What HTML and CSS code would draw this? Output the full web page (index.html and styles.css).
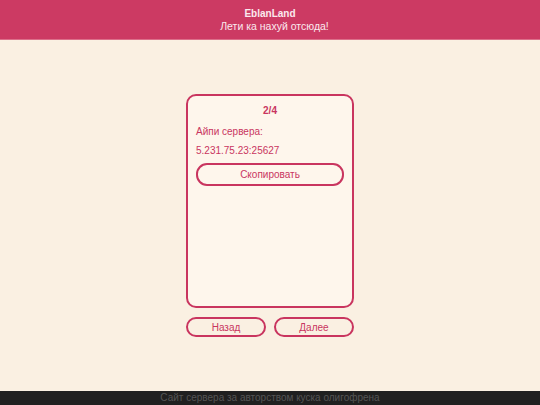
FILE: index.html
```html
<!DOCTYPE html>
<html lang="ru">
<head>
<meta charset="utf-8">
<title>EblanLand</title>
<link rel="stylesheet" href="styles.css">
</head>
<body>
<div class="page">
  <header class="header">
    <div class="title">EblanLand</div>
    <div class="subtitle">Лети ка нахуй отсюда!</div>
  </header>
  <main class="main">
    <div class="wrap">
      <div class="card">
        <div class="step">2/4</div>
        <p class="label">Айпи сервера:</p>
        <p class="ip">5.231.75.23:25627</p>
        <button class="btn copy">Скопировать</button>
      </div>
      <div class="nav">
        <button class="btn navbtn">Назад</button>
        <button class="btn navbtn">Далее</button>
      </div>
    </div>
  </main>
  <footer class="footer">Сайт сервера за авторством куска олигофрена</footer>
</div>
</body>
</html>
```
FILE: styles.css
```css
* { box-sizing: border-box; }
html, body { margin: 0; padding: 0; }
body {
  font-family: "Liberation Sans", Arial, sans-serif;
  background: #faf0e2;
  color: #c9355f;
}
.page {
  display: flex;
  flex-direction: column;
  height: 405px;
}
.header {
  height: 40px;
  background: #cc3a63;
  border-bottom: 1px solid #dc6f8a;
  color: #fbe9ee;
  text-align: center;
  font-size: 10px;
  padding-top: 8px;
  line-height: 12px;
}
.title { font-weight: bold; }
.subtitle { font-size: 10.5px; padding-left: 9px; }
.main {
  flex: 1;
  display: flex;
  align-items: center;
  justify-content: center;
}
.wrap {
  width: 168px;
  display: flex;
  flex-direction: column;
  gap: 9px;
}
.card {
  height: 214px;
  background: #fef6ec;
  border: 2px solid #c9355f;
  border-radius: 10px;
  padding: 8px 8px;
  font-size: 10px;
}
.step {
  text-align: center;
  font-weight: bold;
  line-height: 13px;
}
.label { margin: 8px 0 0; line-height: 13px; }
.ip { margin: 6px 0 0; line-height: 13px; }
.btn {
  font-family: "Liberation Sans", Arial, sans-serif;
  font-size: 10px;
  color: #c9355f;
  background: transparent;
  border: 2px solid #c9355f;
  cursor: pointer;
}
.copy {
  display: block;
  width: 100%;
  height: 23px;
  margin-top: 6px;
  border-radius: 11px;
}
.nav {
  display: flex;
  gap: 8px;
}
.navbtn {
  flex: 1;
  height: 20px;
  border-radius: 10px;
  padding: 0;
}
.footer {
  height: 14px;
  background: #202020;
  color: #555555;
  text-align: center;
  font-size: 10px;
  line-height: 14px;
}
```
